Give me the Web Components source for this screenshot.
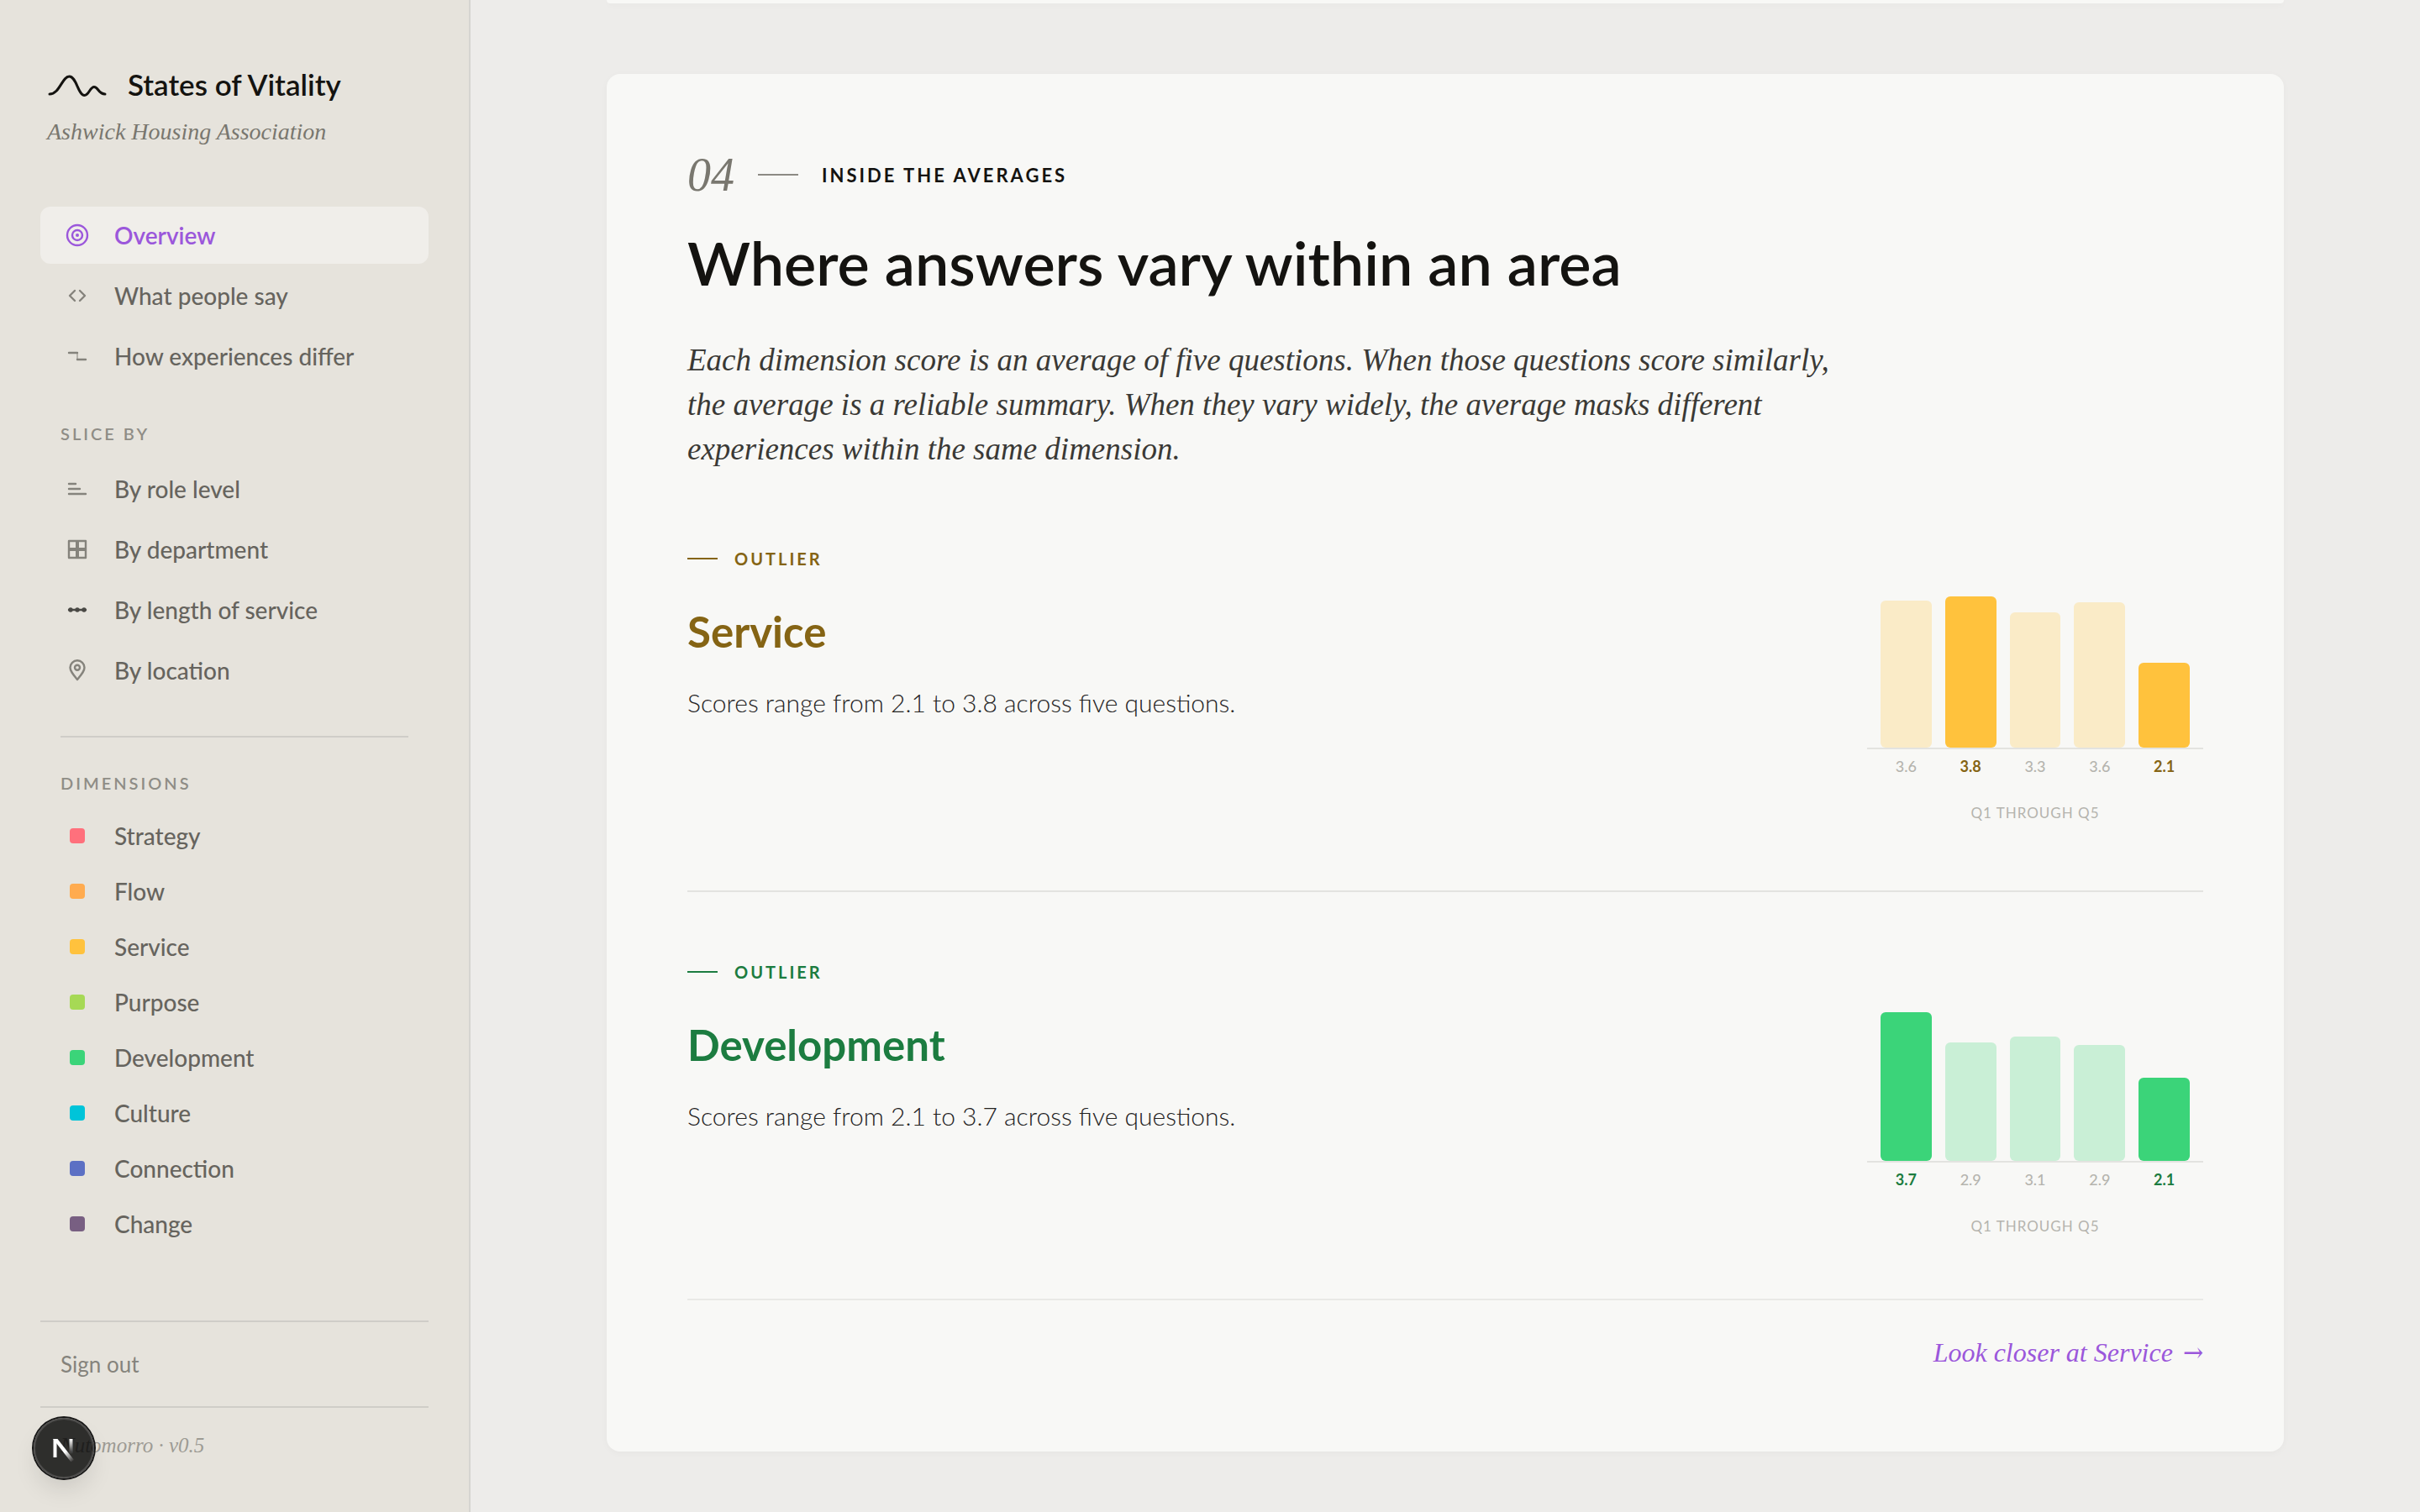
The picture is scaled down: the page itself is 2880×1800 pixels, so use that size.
<!DOCTYPE html>
<html lang="en">
<head>
<meta charset="utf-8">
<meta name="viewport" content="width=device-width, initial-scale=1">
<title>States of Vitality</title>
<style>
:root {
  --sans: Lato, "Open Sans", sans-serif;
  --serif: "Liberation Serif", "DejaVu Serif", serif;
  --ink: #141310;
  --ink-soft: #3a3935;
  --ink-mid: #66645e;
  --ink-faint: #8f8d86;
  --accent: #9b57db;
  --line: #e3e3e0;
  --line-side: #cfcdc8;
}
body {
  margin: 0;
  background: #edecea;
  color: var(--ink);
  font-family: var(--sans);
}
</style>
</head>
<body>
<app-shell>
  <side-bar slot="side">
    <brand-mark slot="brand" org="Ashwick Housing Association">States of Vitality</brand-mark>
    <nav-group>
      <nav-item icon="target" active>Overview</nav-item>
      <nav-item icon="brackets">What people say</nav-item>
      <nav-item icon="step">How experiences differ</nav-item>
    </nav-group>
    <nav-group label="Slice by">
      <nav-item icon="levels">By role level</nav-item>
      <nav-item icon="grid">By department</nav-item>
      <nav-item icon="dots">By length of service</nav-item>
      <nav-item icon="pin">By location</nav-item>
    </nav-group>
    <nav-group label="Dimensions" divided>
      <nav-item swatch="#ff707c">Strategy</nav-item>
      <nav-item swatch="#ffab4f">Flow</nav-item>
      <nav-item swatch="#ffc23d">Service</nav-item>
      <nav-item swatch="#a6d955">Purpose</nav-item>
      <nav-item swatch="#3bd479">Development</nav-item>
      <nav-item swatch="#00c4d9">Culture</nav-item>
      <nav-item swatch="#5c70c4">Connection</nav-item>
      <nav-item swatch="#785f82">Change</nav-item>
    </nav-group>
    <span slot="version">Nutomorro · v0.5</span>
  </side-bar>

  <report-card tail></report-card>
  <report-card>
    <section-head number="04" kicker="Inside the averages">
      Where answers vary within an area
      <span slot="lead">Each dimension score is an average of five questions. When those questions score similarly, the average is a reliable summary. When they vary widely, the average masks different experiences within the same dimension.</span>
    </section-head>
    <outlier-row name="Service" style="--tone: #856414; --bar: #ffc23d">
      Scores range from 2.1 to 3.8 across five questions.
      <score-chart slot="chart" scores="3.6 3.8 3.3 3.6 2.1" heights="175 180 161 173 101" marked="1 4"></score-chart>
    </outlier-row>
    <outlier-row name="Development" last style="--tone: #1c7c40; --bar: #3bd479">
      Scores range from 2.1 to 3.7 across five questions.
      <score-chart slot="chart" scores="3.7 2.9 3.1 2.9 2.1" heights="177 141 148 138 99" marked="0 4"></score-chart>
    </outlier-row>
    <card-link>Look closer at Service</card-link>
  </report-card>
</app-shell>
<dev-badge></dev-badge>

<script>
const ICONS = {
  target: `<circle cx="14" cy="14" r="12"/><circle cx="14" cy="14" r="6"/><circle cx="14" cy="14" r="2" fill="currentColor" stroke="none"/>`,
  brackets: `<path d="M11 8 5 14l6 6M17 8l6 6-6 6"/>`,
  step: `<path d="M4 10h10M14 18h10"/><path d="M14 10v8" stroke-width="1"/>`,
  levels: `<path d="M4 8h8M4 14h13M4 20h20"/>`,
  grid: `<path d="M4 4h20v20H4z"/><path d="M14 5v18M5 14h18" stroke-width="4" stroke-linecap="butt"/>`,
  dots: `<g stroke="#4a4945"><path d="M4 14h20"/><g fill="#4a4945" stroke="none"><circle cx="6" cy="14" r="2.700"/><circle cx="14" cy="14" r="2.700"/><circle cx="22" cy="14" r="2.700"/></g></g>`,
  pin: `<path d="M14 25C9 19 5.500 15 5.500 10.800a8.500 8.500 0 0 1 17 0C22.500 15 19 19 14 25z"/><circle cx="14" cy="10.700" r="3"/>`
};

class AppShell extends HTMLElement {
  constructor() {
    super();
    this.attachShadow({ mode: "open" });
    this.shadowRoot.innerHTML = `
<style>
:host {
    display: grid;
    grid-template-columns: 560px minmax(0, 1fr);
    min-height: 100vh;
}
main {
    display: flex;
    flex-direction: column;
    gap: 84px;
    padding: 0 162px 72px;
}
</style>
<slot name="side"></slot>
<main><slot></slot></main>
    `;
  }
}

class SideBar extends HTMLElement {
  constructor() {
    super();
    this.attachShadow({ mode: "open" });
    this.shadowRoot.innerHTML = `
<style>
:host {
    display: flex;
    flex-direction: column;
    box-sizing: border-box;
    padding: 76px 48px 34px;
    background: #e6e3dc;
    border-right: 2px solid #d6d5d1;
}
nav {
    flex: 1;
    padding-top: 72px;
}
button {
    width: 100%;
    height: 104px;
    padding: 0 24px;
    border: solid var(--line-side);
    border-width: 2px 0;
    background: none;
    color: #85837c;
    font: 400 26px/32px var(--sans);
    text-align: left;
    cursor: pointer;
}
footer {
    padding: 28px 24px;
    color: #9d9b94;
    font: italic 25px/34px var(--serif);
}
</style>
<slot name="brand"></slot>
<nav aria-label="Report"><slot></slot></nav>
<button type="button">Sign out</button>
<footer><slot name="version"></slot></footer>
    `;
  }
}

class BrandMark extends HTMLElement {
  constructor() {
    super();
    this.attachShadow({ mode: "open" });
    this.shadowRoot.innerHTML = `
<style>
:host {
    display: block;
    padding: 0 8px;
}
.name {
    display: flex;
    align-items: center;
    gap: 24px;
    font-size: 35px;
    font-weight: 600;
    line-height: 48px;
}
svg {
    width: 72px;
    height: 32px;
}
p {
    margin: 16px 0 0;
    color: #79776f;
    font: italic 28px/34px var(--serif);
}
</style>
<div class="name">
  <svg viewBox="0 0 72 32" fill="none" stroke="currentColor" stroke-width="3" stroke-linecap="round" aria-hidden="true">
    <path d="M3 28C15 28 18 7 26.500 7S37 29.500 44.500 29.500C50 29.500 51 19.500 56 19.500S61 28 69 28"/>
  </svg>
  <slot></slot>
</div>
<p></p>
    `;
  }

  connectedCallback() {
    this.shadowRoot.querySelector("p").textContent = this.getAttribute("org");
  }
}

class NavGroup extends HTMLElement {
  constructor() {
    super();
    this.attachShadow({ mode: "open" });
    this.shadowRoot.innerHTML = `
<style>
:host {
    display: block;
}
.items {
    display: flex;
    flex-direction: column;
    gap: 4px;
}
h2 {
    margin: 46px 24px 20px;
    color: var(--ink-faint);
    font-size: 20px;
    font-weight: 600;
    line-height: 24px;
    letter-spacing: 3px;
    text-transform: uppercase;
}
:host([divided]) h2 {
    margin-top: 44px;
    padding-top: 42px;
    border-top: 2px solid var(--line-side);
}
h2[hidden] {
    display: none;
}
</style>
<h2></h2>
<div class="items"><slot></slot></div>
    `;
  }

  connectedCallback() {
    const heading = this.shadowRoot.querySelector("h2");
    heading.textContent = this.getAttribute("label");
    heading.hidden = !this.hasAttribute("label");
  }
}

class NavItem extends HTMLElement {
  constructor() {
    super();
    this.attachShadow({ mode: "open" });
  }

  connectedCallback() {
    const swatch = this.getAttribute("swatch");
    const mark = swatch
      ? `<i style="background: ${swatch}"></i>`
      : `<svg viewBox="0 0 28 28" fill="none" stroke="currentColor" stroke-width="2" stroke-linecap="round" stroke-linejoin="round" aria-hidden="true">${ICONS[this.getAttribute("icon")]}</svg>`;
    this.shadowRoot.innerHTML = `
<style>
:host {
    display: block;
}
a {
    display: flex;
    align-items: center;
    gap: 24px;
    height: 68px;
    padding: 0 24px;
    border-radius: 12px;
    color: var(--ink-mid);
    font-size: 28px;
    font-weight: 500;
    text-decoration: none;
}
:host([swatch]) a {
    height: 62px;
}
:host([active]) a {
    background: #f0eeea;
    color: var(--accent);
    font-weight: 600;
}
.mark {
    display: flex;
    justify-content: center;
    width: 40px;
    color: #85837c;
}
:host([active]) .mark {
    color: inherit;
}
svg {
    width: 28px;
    height: 28px;
    stroke-width: 2.4;
}
i {
    width: 18px;
    height: 18px;
    border-radius: 4px;
}
</style>
<a href="#"><span class="mark">${mark}</span><slot></slot></a>
    `;
    if (this.hasAttribute("active")) {
      this.shadowRoot.querySelector("a").setAttribute("aria-current", "page");
    }
  }
}

class ReportCard extends HTMLElement {
  constructor() {
    super();
    this.attachShadow({ mode: "open" });
    this.shadowRoot.innerHTML = `
<style>
:host {
    display: block;
    padding: 96px;
    border-radius: 16px;
    background: #f8f8f6;
    box-shadow: 0 2px 8px rgba(20, 19, 16, 0.03);
}
/* lower edge of the card that has scrolled past */
:host([tail]) {
    padding: 2px;
    border-radius: 0 0 16px 16px;
}
</style>
<slot></slot>
    `;
  }
}

class SectionHead extends HTMLElement {
  constructor() {
    super();
    this.attachShadow({ mode: "open" });
    this.shadowRoot.innerHTML = `
<style>
:host {
    display: block;
}
.kicker {
    display: flex;
    align-items: center;
    gap: 28px;
    height: 48px;
    font-size: 22px;
    font-weight: 700;
    letter-spacing: 3px;
    text-transform: uppercase;
}
.number {
    color: #79776f;
    font: italic 56px/48px var(--serif);
    letter-spacing: 0;
}
.rule {
    width: 48px;
    height: 2px;
    background: #8c8a84;
}
h1 {
    margin: 40px 0 50px;
    font-size: 72px;
    font-weight: 600;
    line-height: 80px;
}
p {
    max-width: 1380px;
    margin: 0 0 9px;
    color: var(--ink-soft);
    font: italic 37px/53px var(--serif);
}
</style>
<div class="kicker"><span class="number"></span><span class="rule"></span><span class="text"></span></div>
<h1><slot></slot></h1>
<p><slot name="lead"></slot></p>
    `;
  }

  connectedCallback() {
    this.shadowRoot.querySelector(".number").textContent = this.getAttribute("number");
    this.shadowRoot.querySelector(".text").textContent = this.getAttribute("kicker");
  }
}

class OutlierRow extends HTMLElement {
  constructor() {
    super();
    this.attachShadow({ mode: "open" });
    this.shadowRoot.innerHTML = `
<style>
:host {
    display: grid;
    grid-template-columns: minmax(0, 1fr) 400px;
    align-items: start;
    padding: 84px 0 80px;
    border-bottom: 2px solid var(--line);
}
:host([last]) {
    padding-bottom: 74px;
    border-bottom-color: #e9e9e6;
}
.tag {
    display: flex;
    align-items: center;
    gap: 20px;
    color: var(--tone);
    font-size: 20px;
    font-weight: 700;
    line-height: 22px;
    letter-spacing: 3px;
    text-transform: uppercase;
}
.tag::before {
    content: "";
    width: 36px;
    height: 2px;
    background: currentColor;
}
h2 {
    margin: 46px 0 30px;
    color: var(--tone);
    font-size: 51px;
    font-weight: 700;
    line-height: 60px;
}
p {
    margin: 0;
    color: #24231f;
    font-size: 30px;
    font-weight: 300;
    line-height: 48px;
}
</style>
<div>
  <div class="tag">Outlier</div>
  <h2></h2>
  <p><slot></slot></p>
</div>
<slot name="chart"></slot>
    `;
  }

  connectedCallback() {
    this.shadowRoot.querySelector("h2").textContent = this.getAttribute("name");
  }
}

class ScoreChart extends HTMLElement {
  constructor() {
    super();
    this.attachShadow({ mode: "open" });
  }

  connectedCallback() {
    const scores = this.getAttribute("scores").split(" ");
    const heights = this.getAttribute("heights").split(" ");
    const marked = this.getAttribute("marked").split(" ").map(Number);
    const cls = (i) => (marked.includes(i) ? "on" : "");

    this.shadowRoot.innerHTML = `
<style>
:host {
    display: block;
}
figure {
    margin: 0;
}
.plot, .values {
    display: grid;
    grid-template-columns: repeat(5, minmax(0, 1fr));
    gap: 16px;
    padding: 0 16px;
}
.plot {
    align-items: end;
    height: 236px;
    border-bottom: 2px solid var(--line);
}
.plot span {
    border-radius: 6px;
    background: var(--bar);
    opacity: 0.25;
}
.plot .on {
    opacity: 1;
}
.values {
    padding-top: 8px;
    color: #b5b4ae;
    font-size: 18px;
    font-weight: 500;
    line-height: 24px;
    text-align: center;
}
.values .on {
    color: var(--tone);
    font-weight: 700;
}
figcaption {
    margin-top: 32px;
    color: #b5b4ae;
    font-size: 17px;
    line-height: 24px;
    letter-spacing: 1px;
    text-align: center;
    text-transform: uppercase;
}
</style>
<figure>
  <div class="plot">${heights.map((h, i) => `<span class="${cls(i)}" style="height: ${h}px"></span>`).join("")}</div>
  <div class="values">${scores.map((s, i) => `<span class="${cls(i)}">${s}</span>`).join("")}</div>
  <figcaption>Q1 through Q5</figcaption>
</figure>
    `;
  }
}

class CardLink extends HTMLElement {
  constructor() {
    super();
    this.attachShadow({ mode: "open" });
    this.shadowRoot.innerHTML = `
<style>
:host {
    display: flex;
    justify-content: flex-end;
    padding-top: 40px;
}
a {
    display: flex;
    gap: 12px;
    color: var(--accent);
    font: italic 32px/44px var(--serif);
    text-decoration: none;
}
span {
    font-family: "DejaVu Serif Condensed", "DejaVu Serif", serif;
}
</style>
<a href="#"><slot></slot><span>→</span></a>
    `;
  }
}

class DevBadge extends HTMLElement {
  constructor() {
    super();
    this.attachShadow({ mode: "open" });
    this.shadowRoot.innerHTML = `
<style>
:host {
    position: fixed;
    left: 40px;
    bottom: 40px;
}
button {
    display: block;
    width: 72px;
    height: 72px;
    padding: 0;
    border: 0;
    border-radius: 50%;
    background: rgba(0, 0, 0, 0.8);
    box-shadow: 0 0 0 2px #171717, inset 0 0 0 2px rgba(255, 255, 255, 0.14), 0 16px 32px -8px rgba(0, 0, 0, 0.16);
    cursor: pointer;
}
svg {
    display: block;
}
</style>
<button type="button" aria-label="Open developer tools">
  <svg width="72" height="72" viewBox="0 0 72 72" fill="none" stroke-width="4" aria-hidden="true">
    <defs>
      <linearGradient id="diag" gradientUnits="userSpaceOnUse" x1="38" y1="40" x2="47" y2="52">
        <stop stop-color="#fff"/><stop offset="1" stop-color="#fff" stop-opacity="0"/>
      </linearGradient>
      <linearGradient id="stem" gradientUnits="userSpaceOnUse" x1="44" y1="25" x2="44" y2="43">
        <stop stop-color="#fff"/><stop offset="1" stop-color="#fff" stop-opacity="0"/>
      </linearGradient>
    </defs>
    <path d="M25.500 47V25" stroke="#fff"/>
    <path d="M23.500 25h5L48 50l-3.500 2.500-21-27z" fill="url(#diag)"/>
    <path d="M44.500 25v18" stroke="url(#stem)"/>
  </svg>
</button>
    `;
  }
}

customElements.define("app-shell", AppShell);
customElements.define("side-bar", SideBar);
customElements.define("brand-mark", BrandMark);
customElements.define("nav-group", NavGroup);
customElements.define("nav-item", NavItem);
customElements.define("report-card", ReportCard);
customElements.define("section-head", SectionHead);
customElements.define("outlier-row", OutlierRow);
customElements.define("score-chart", ScoreChart);
customElements.define("card-link", CardLink);
customElements.define("dev-badge", DevBadge);
</script>
</body>
</html>
